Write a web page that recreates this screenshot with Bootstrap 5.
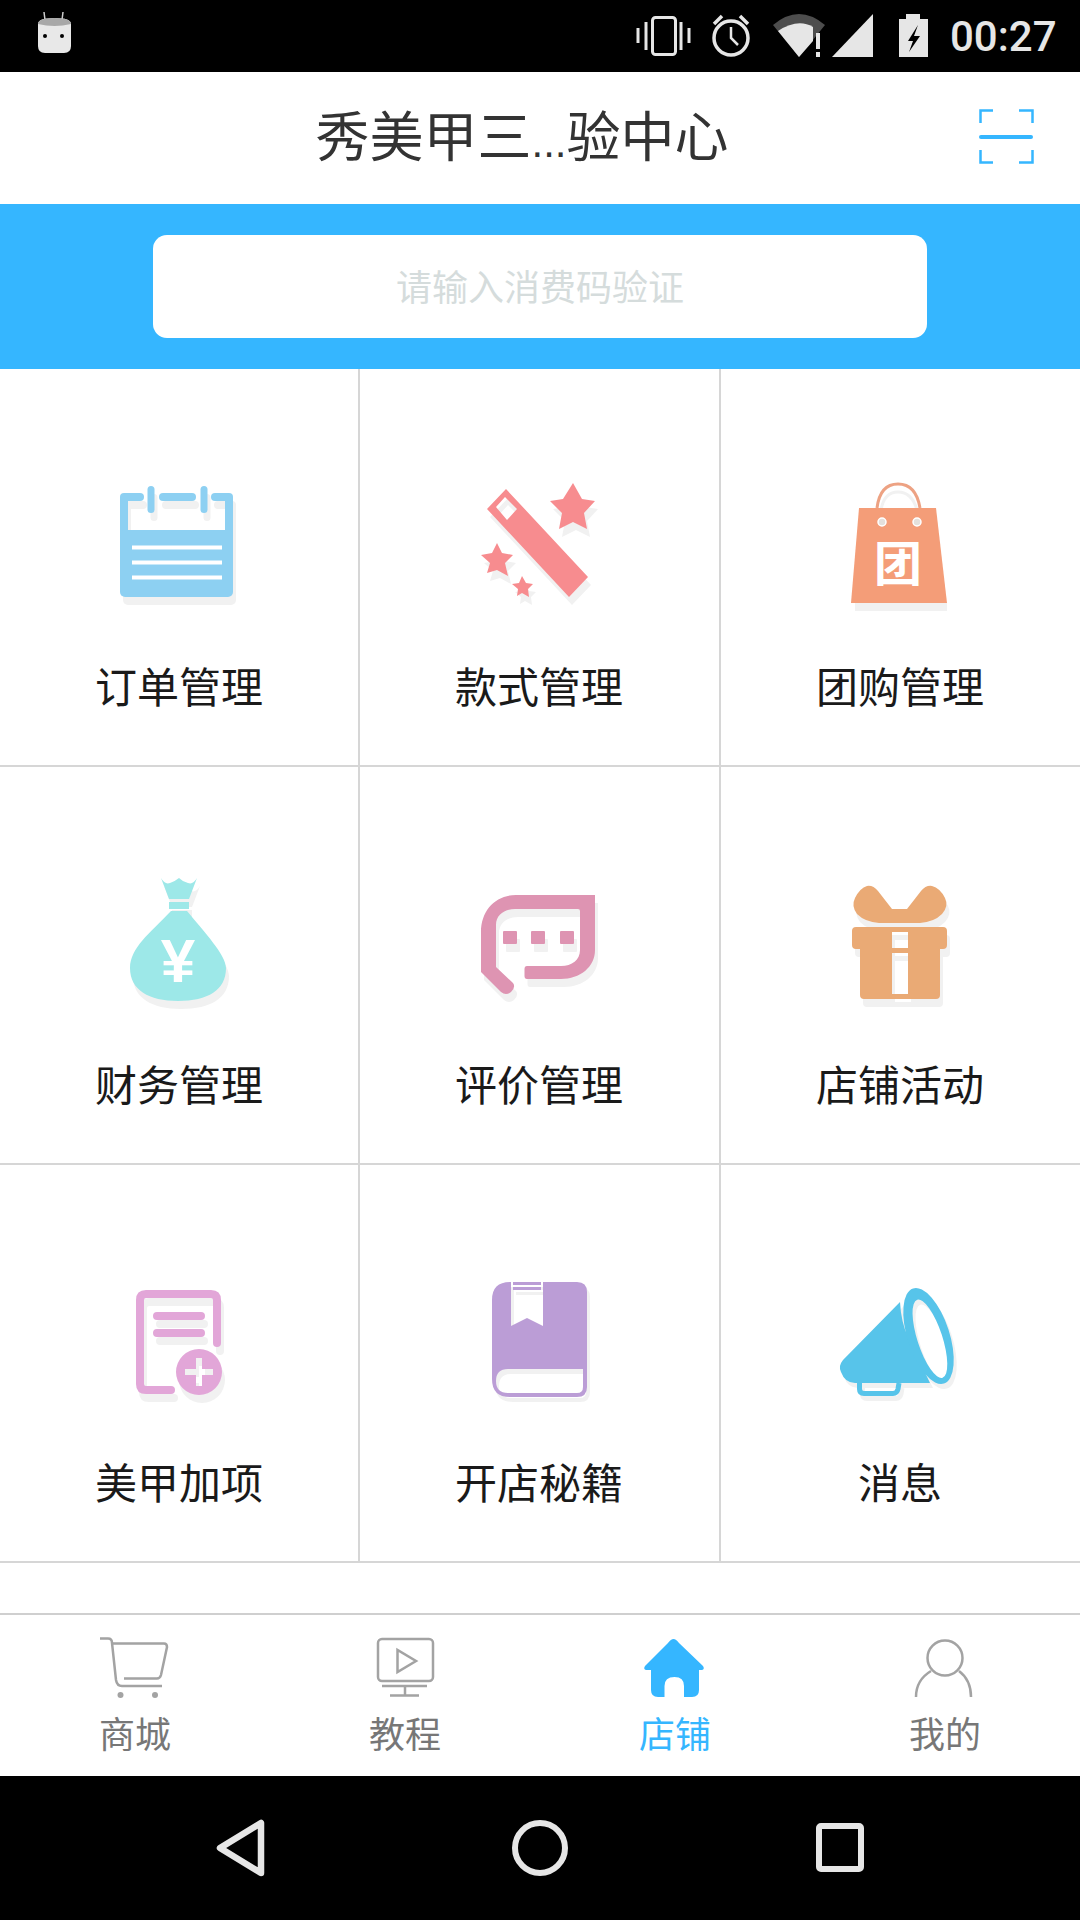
<!DOCTYPE html>
<html lang="zh-CN">
<head>
  <meta charset="UTF-8">
  <meta name="viewport" content="width=device-width, initial-scale=1">
  <title>秀美甲三...验中心</title>
  <link href="https://cdn.jsdelivr.net/npm/bootstrap@5.3.3/dist/css/bootstrap.min.css" rel="stylesheet">
  <style>
    body { width: 1080px; height: 1920px; overflow: hidden; font-family: "Noto Sans CJK SC", "Liberation Sans", sans-serif; }
    svg { display: block; }

    .status-strip { height: 72px; padding-left: 30px; }
    .clock { width: 130px; margin-left: 20px; font-family: Roboto, sans-serif; font-weight: 500; font-size: 42px; line-height: 74px; color: #e6e6e6; }

    .top-head { height: 132px; }
    .top-title { padding-left: 74px; font-size: 54px; line-height: 138px; color: #333; }
    .title-dots { font-family: "Liberation Sans", sans-serif; font-size: 42px; }
    .scan-btn { margin-right: 38px; }

    .search-band { height: 165px; padding: 31px 153px; background: #35b6ff; }
    .search-box { height: 103px; padding-bottom: 3px; border-radius: 14px; font-size: 36px; color: #d5dcdc; }

    .tile { height: 398px; padding-top: 101px; border-bottom: 2px solid #d6d6d6; }
    .tile-mid { border-right: 2px solid #d6d6d6; }
    .tile-center { width: 361px; padding-right: 1px; }
    .tile-last { width: 359px; padding-right: 1px; }
    .tile-name { margin-top: 35px; font-size: 42px; line-height: 60px; color: #1a1a1a; }

    .tab-strip { height: 163px; margin-top: 50px; padding-top: 17px; border-top: 2px solid #cfcfcf; }
    .tab-name { font-size: 36px; line-height: 60px; color: #777; }
    .tab-on { color: #35b6ff; }

    .softkeys { height: 144px; }
    .softkey { width: 300px; }

    .c-shadow { color: #f1f1f1; }
    .c-blue { color: #8dd0f2; }
    .c-coral { color: #f78c8f; }
    .c-aqua { color: #9de8e8; }
    .c-rose { color: #de94b2; }
    .c-sand { color: #eaaa75; }
    .c-pink { color: #e2a6d8; }
    .c-violet { color: #bb9dd6; }
    .c-sky { color: #57c4ea; }
    .bag-mark { font-family: "Noto Sans CJK SC", sans-serif; font-size: 48px; font-weight: 700; fill: #fff; }
    .yen-mark { font-family: "Liberation Sans", sans-serif; font-size: 62px; font-weight: 700; fill: #fff; }
  </style>
</head>
<body class="bg-white">

  <svg width="0" height="0" class="position-absolute">
    <defs>
      <g id="ic-calendar" fill="currentColor">
        <rect x="120" y="493" width="24" height="8" rx="4"/>
        <rect x="159" y="493" width="37" height="8" rx="4"/>
        <rect x="211" y="493" width="22" height="8" rx="4"/>
        <rect x="120" y="497" width="8" height="40"/>
        <rect x="225" y="497" width="8" height="40"/>
        <rect x="120" y="530" width="113" height="67" rx="5"/>
        <rect x="147.5" y="486" width="7" height="27" rx="3.5"/>
        <rect x="200.5" y="486" width="7" height="27" rx="3.5"/>
      </g>
      <g id="ic-wand" fill="currentColor">
        <path fill-rule="evenodd" d="M506 489 L588 577 L569 597 L487 509Z M505 497 L496 507 L507 520 L517 509Z"/>
        <path d="M573 483 L582 499 L595 501 L584 513 L587 529 L573 522 L559 529 L562 513 L550 501 L563 499Z"/>
        <path d="M497 543 L502 553 L513 555 L505 563 L508 576 L497 570 L487 573 L490 563 L481 555 L492 553Z"/>
        <path d="M522 576 L526 583 L533 584 L528 589 L529 597 L522 593 L517 596 L518 589 L512 584 L519 583Z"/>
      </g>
      <g id="ic-moneybag" fill="currentColor">
        <path d="M161 878 Q165 885 170 883 Q174 882 179 878 Q183 882 188 883 Q193 885 197 878 L189 899 H169Z"/>
        <rect x="169" y="902" width="20" height="7"/>
        <path d="M171 911 H187 C205 933 226 955 226 968 C226 990 208 1001 178 1001 C149 1001 130 990 130 968 C130 948 150 933 171 911Z"/>
      </g>
      <g id="ic-chat" fill="currentColor">
        <path d="M595 895 H516 C496 895 481 910 481 932 V972 L501 992 Q506 996 511 992 Q516 987 513 983 L496 967 V925 C496 915 504 909 515 909 H578 Q580 909 580 911 V950 C580 960 572 966 561 966 H527 Q524.5 966 524.5 969 V976 Q524.5 979 527 979 H561 C580 979 595 967 595 950Z"/>
        <rect x="503" y="931" width="14" height="13" rx="1"/>
        <rect x="531" y="931" width="14" height="13" rx="1"/>
        <rect x="560" y="931" width="14" height="13" rx="1"/>
      </g>
      <g id="ic-gift" fill="currentColor">
        <path d="M899.5 909 H907 L921 891 Q926 885 932 886 Q940 888 945 898 Q949 906 942 914 Q934 922 920 923 H879 Q865 922 857 914 Q851 906 855 898 Q860 888 867 886 Q873 885 878 891 L892 909Z"/>
        <path fill-rule="evenodd" d="M856 927 H943 Q947 927 947 931 V945 Q947 949 943 949 H940 V995 Q940 999 936 999 H864 Q860 999 860 995 V949 H856 Q852 949 852 945 V931 Q852 927 856 927Z M892 932 V948 H908 V932Z M892 953 V994 H908 V953Z"/>
      </g>
      <g id="ic-docplus">
        <path fill="none" stroke="currentColor" stroke-width="8" stroke-linecap="round" d="M171 1390 H146 Q140 1390 140 1384 V1300 Q140 1294 146 1294 H211 Q217 1294 217 1300 V1343"/>
        <path fill="none" stroke="currentColor" stroke-width="8" stroke-linecap="round" d="M157 1316 H201 M157 1333 H201"/>
        <path fill="currentColor" fill-rule="evenodd" d="M176 1372 a23 23 0 1 0 46 0 a23 23 0 1 0 -46 0Z M196 1358 H202 V1369 H213 V1375 H202 V1386 H196 V1375 H185 V1369 H196Z"/>
      </g>
      <g id="ic-book" fill="currentColor">
        <path fill-rule="evenodd" d="M510 1282 H577 Q587 1282 587 1292 V1387 Q587 1397 577 1397 H510 Q492 1397 492 1379 V1300 Q492 1282 510 1282Z M511 1282 V1326 L527 1318 L543 1326 V1282Z M508 1369 H583 V1387 Q583 1393 577 1393 H508 Q496 1393 496 1381 Q496 1369 508 1369Z"/>
        <rect x="513" y="1282" width="28" height="3"/>
        <rect x="513" y="1287" width="28" height="3"/>
      </g>
      <g id="ic-horn">
        <path fill="currentColor" d="M900 1302 Q901 1322 908 1337 L930 1383 H855 Q845 1383 841 1372 Q838 1366 843 1360Z"/>
        <g transform="rotate(-18 928.5 1336)">
          <path fill="currentColor" fill-rule="evenodd" d="M907.5 1336 a21 50 0 1 0 42 0 a21 50 0 1 0 -42 0Z M916.5 1339 a12.5 41 0 1 0 25 0 a12.5 41 0 1 0 -25 0Z"/>
        </g>
        <path fill="none" stroke="currentColor" stroke-width="5" d="M859.5 1383 V1389 Q859.5 1393.5 864 1393.5 H893 Q897 1393.5 898 1389 L899 1383"/>
      </g>
    </defs>
  </svg>

  <div class="d-flex flex-column">

    <div class="status-strip bg-black d-flex">
      <svg width="50" height="72" viewBox="30 0 50 72">
        <path d="M45 20 L44 12 M62 20 L63 12" stroke="#ccc" stroke-width="1.5"/>
        <path d="M38 24 Q38 18 54.5 18 Q71 18 71 24 V46 Q71 53 64 53 H45 Q38 53 38 46Z" fill="#e8e8e8"/>
        <path d="M38 24 Q38 18 54.5 18 Q71 18 71 24 Q54.5 28 38 24Z" fill="#a8a8a8"/>
        <circle cx="45" cy="36" r="2" fill="#000"/>
        <circle cx="62" cy="36" r="2" fill="#000"/>
      </svg>
      <svg class="ms-auto" width="300" height="72" viewBox="630 0 300 72">
        <rect x="652.5" y="17.5" width="23" height="37" rx="3" fill="none" stroke="#e6e6e6" stroke-width="3"/>
        <path d="M638 28 V43 M646 22 V50 M681 22 V50 M689 28 V43" stroke="#e6e6e6" stroke-width="3" fill="none"/>
        <circle cx="731" cy="38" r="17" fill="none" stroke="#e6e6e6" stroke-width="3.5"/>
        <path d="M731 27 V38 L738 45" fill="none" stroke="#e6e6e6" stroke-width="2.5"/>
        <path d="M714 24 L722 16 M748 24 L740 16" stroke="#e6e6e6" stroke-width="3.5"/>
        <path d="M773 25 Q799 3 825 25 L799 57Z" fill="#4d4d4d"/>
        <path d="M778 31 Q798 18 813 27 L813 41 L799 57Z" fill="#e6e6e6"/>
        <rect x="816" y="33" width="4" height="16" fill="#e6e6e6"/>
        <rect x="816" y="52" width="4" height="5" fill="#e6e6e6"/>
        <path d="M873 14 V57 H832Z" fill="#e6e6e6"/>
        <path fill="#e6e6e6" fill-rule="evenodd" d="M906 14 H920 V19 H928 V57 H899 V19 H906Z M918 25 L908 41 H913 L909 52 L920 36 H914Z"/>
      </svg>
      <div class="clock">00:27</div>
    </div>

    <div class="top-head d-flex align-items-center">
      <div class="top-title flex-grow-1 text-center">秀美甲三<span class="title-dots">...</span>验中心</div>
      <svg class="scan-btn" width="72" height="72" viewBox="970 102 72 72">
        <path d="M980.5 123 V110.5 H993 M1019 110.5 H1032.5 V123 M980.5 150 V162.5 H993 M1019 162.5 H1032.5 V150" fill="none" stroke="#35b6ff" stroke-width="2.5"/>
        <rect x="979" y="135" width="54" height="4" rx="2" fill="#35b6ff"/>
      </svg>
    </div>

    <div class="search-band">
      <div class="search-box bg-white d-flex align-items-center justify-content-center">请输入消费码验证</div>
    </div>

    <div class="row g-0">
      <div class="col-4 tile tile-mid text-center">
        <svg class="mx-auto" width="150" height="150" viewBox="104 470 150 150">
          <use href="#ic-calendar" class="c-shadow" transform="translate(3 8)"/>
          <use href="#ic-calendar" class="c-blue"/>
          <path d="M132 547.5 H222 M132 562.5 H222 M132 577.5 H222" stroke="#fff" stroke-width="4"/>
        </svg>
        <div class="tile-name">订单管理</div>
      </div>
      <div class="col-4 tile tile-mid tile-center text-center">
        <svg class="mx-auto" width="150" height="150" viewBox="464 470 150 150">
          <use href="#ic-wand" class="c-shadow" transform="translate(3 8)"/>
          <use href="#ic-wand" class="c-coral"/>
        </svg>
        <div class="tile-name">款式管理</div>
      </div>
      <div class="col-4 tile tile-last text-center">
        <svg class="mx-auto" width="150" height="150" viewBox="825 470 150 150">
          <rect x="855" y="603" width="92" height="8" fill="#f1f1f1"/>
          <path d="M881 510 Q884 492 898 492 Q912 492 917 510" fill="none" stroke="#f1f1f1" stroke-width="3"/>
          <path d="M877 508 Q880 484 898 484 Q916 484 920 508" fill="none" stroke="#eda283" stroke-width="3"/>
          <path d="M859 508 H936 L947 603 H851Z" fill="#f49d78"/>
          <circle cx="882" cy="522" r="4" fill="#e4e0dc" stroke="#fff" stroke-width="1.5"/>
          <circle cx="917" cy="522" r="4" fill="#e4e0dc" stroke="#fff" stroke-width="1.5"/>
          <text class="bag-mark" x="898" y="581" text-anchor="middle">团</text>
        </svg>
        <div class="tile-name">团购管理</div>
      </div>

      <div class="col-4 tile tile-mid text-center">
        <svg class="mx-auto" width="150" height="150" viewBox="104 868 150 150">
          <use href="#ic-moneybag" class="c-shadow" transform="translate(3 8)"/>
          <use href="#ic-moneybag" class="c-aqua"/>
          <text class="yen-mark" x="178" y="982" text-anchor="middle">¥</text>
        </svg>
        <div class="tile-name">财务管理</div>
      </div>
      <div class="col-4 tile tile-mid tile-center text-center">
        <svg class="mx-auto" width="150" height="150" viewBox="464 868 150 150">
          <use href="#ic-chat" class="c-shadow" transform="translate(3 8)"/>
          <use href="#ic-chat" class="c-rose"/>
        </svg>
        <div class="tile-name">评价管理</div>
      </div>
      <div class="col-4 tile tile-last text-center">
        <svg class="mx-auto" width="150" height="150" viewBox="825 868 150 150">
          <use href="#ic-gift" class="c-shadow" transform="translate(3 8)"/>
          <use href="#ic-gift" class="c-sand"/>
        </svg>
        <div class="tile-name">店铺活动</div>
      </div>

      <div class="col-4 tile tile-mid text-center">
        <svg class="mx-auto" width="150" height="150" viewBox="104 1266 150 150">
          <use href="#ic-docplus" class="c-shadow" transform="translate(3 8)"/>
          <use href="#ic-docplus" class="c-pink"/>
        </svg>
        <div class="tile-name">美甲加项</div>
      </div>
      <div class="col-4 tile tile-mid tile-center text-center">
        <svg class="mx-auto" width="150" height="150" viewBox="464 1266 150 150">
          <use href="#ic-book" class="c-shadow" transform="translate(3 5)"/>
          <use href="#ic-book" class="c-violet"/>
        </svg>
        <div class="tile-name">开店秘籍</div>
      </div>
      <div class="col-4 tile tile-last text-center">
        <svg class="mx-auto" width="150" height="150" viewBox="825 1266 150 150">
          <use href="#ic-horn" class="c-shadow" transform="translate(3 5)"/>
          <use href="#ic-horn" class="c-sky"/>
        </svg>
        <div class="tile-name">消息</div>
      </div>
    </div>

    <div class="tab-strip row g-0 text-center">
      <div class="col-3">
        <svg class="mx-auto" width="80" height="70" viewBox="95 1632 80 70">
          <path d="M100 1638.5 H108 Q112 1638.5 112 1643 L116 1680 Q117 1686 122 1686 H162" fill="none" stroke="#a3a3a3" stroke-width="2.5"/>
          <path d="M112 1643.5 H164 Q167 1643.5 167 1647 L161 1675 Q160 1678.5 157 1678.5 H124" fill="none" stroke="#a3a3a3" stroke-width="2.5"/>
          <circle cx="120.5" cy="1695" r="3" fill="#a3a3a3"/>
          <circle cx="155" cy="1695" r="3" fill="#a3a3a3"/>
        </svg>
        <div class="tab-name">商城</div>
      </div>
      <div class="col-3">
        <svg class="mx-auto" width="80" height="70" viewBox="365 1632 80 70">
          <rect x="378" y="1639" width="55" height="42" rx="4" fill="none" stroke="#a3a3a3" stroke-width="2.5"/>
          <path d="M397.5 1650 V1672 L416 1661Z" fill="none" stroke="#a3a3a3" stroke-width="2.5"/>
          <path d="M382 1686 H427 M405 1686 V1695 M390 1695.5 H419" fill="none" stroke="#a3a3a3" stroke-width="2.5"/>
        </svg>
        <div class="tab-name">教程</div>
      </div>
      <div class="col-3">
        <svg class="mx-auto" width="80" height="70" viewBox="635 1632 80 70">
          <path fill="#35b6ff" d="M673.5 1639 Q676 1639 679 1643 L703 1666 Q705 1669 702 1670 H699 V1690 Q699 1697 692 1697 H684 V1686 Q684 1677 674.5 1677 Q664.5 1677 664.5 1686 V1697 H658 Q651 1697 651 1690 V1670 H646 Q643 1669 645 1666 L668 1643 Q671 1639 673.5 1639Z"/>
        </svg>
        <div class="tab-name tab-on">店铺</div>
      </div>
      <div class="col-3">
        <svg class="mx-auto" width="80" height="70" viewBox="905 1632 80 70">
          <circle cx="945" cy="1658" r="17.5" fill="none" stroke="#a3a3a3" stroke-width="2.5"/>
          <path d="M916 1697 Q916 1680 931 1671 M971 1697 Q971 1680 959 1671" fill="none" stroke="#a3a3a3" stroke-width="2.5"/>
        </svg>
        <div class="tab-name">我的</div>
      </div>
    </div>

    <div class="softkeys bg-black d-flex justify-content-center align-items-center">
      <div class="softkey">
        <svg class="mx-auto" width="60" height="70" viewBox="210 1813 60 70">
          <path d="M261 1823 V1873 L220 1848Z" fill="none" stroke="#e6e6e6" stroke-width="6.5" stroke-linejoin="round"/>
        </svg>
      </div>
      <div class="softkey">
        <svg class="mx-auto" width="60" height="70" viewBox="510 1813 60 70">
          <circle cx="540" cy="1848" r="25" fill="none" stroke="#e6e6e6" stroke-width="6"/>
        </svg>
      </div>
      <div class="softkey">
        <svg class="mx-auto" width="60" height="70" viewBox="810 1813 60 70">
          <rect x="819" y="1826" width="42" height="43" rx="2" fill="none" stroke="#e6e6e6" stroke-width="6"/>
        </svg>
      </div>
    </div>

  </div>

  <script src="https://cdn.jsdelivr.net/npm/bootstrap@5.3.3/dist/js/bootstrap.bundle.min.js"></script>
</body>
</html>
